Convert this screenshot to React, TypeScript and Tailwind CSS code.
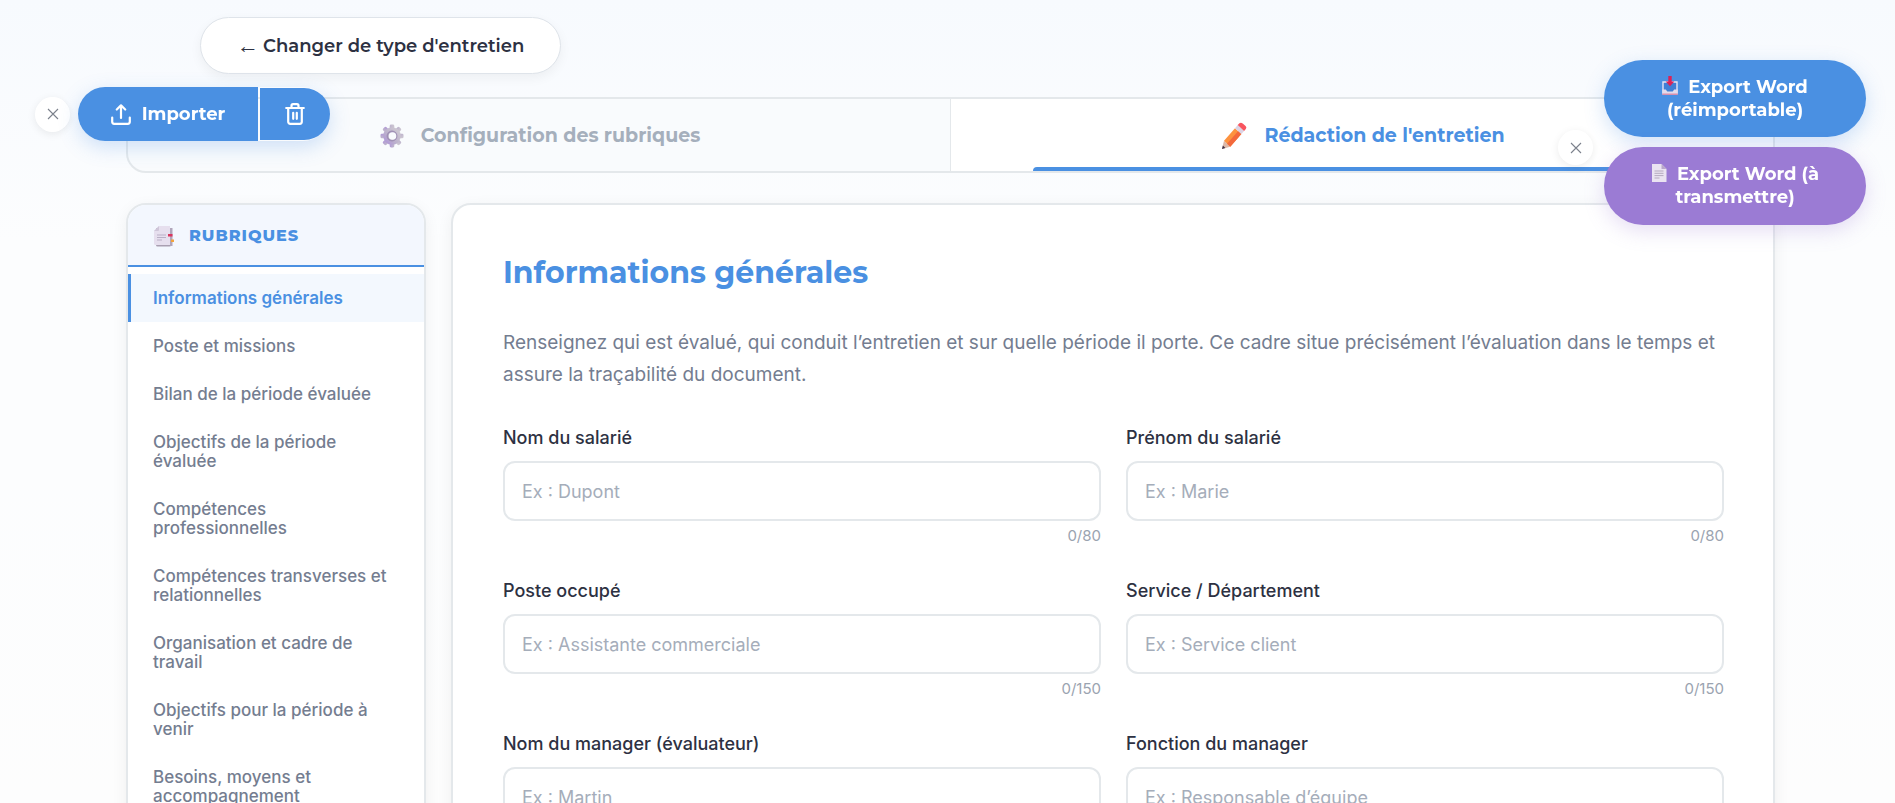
import React from "react";

const MONT = "font-[Montserrat,Inter,sans-serif]";

const sections = [
  "Informations générales",
  "Poste et missions",
  "Bilan de la période évaluée",
  "Objectifs de la période évaluée",
  "Compétences professionnelles",
  "Compétences transverses et relationnelles",
  "Organisation et cadre de travail",
  "Objectifs pour la période à venir",
  "Besoins, moyens et accompagnement",
];

const fields = [
  { id: "nom", label: "Nom du salarié", placeholder: "Ex : Dupont", max: 80 },
  { id: "prenom", label: "Prénom du salarié", placeholder: "Ex : Marie", max: 80 },
  { id: "poste", label: "Poste occupé", placeholder: "Ex : Assistante commerciale", max: 150 },
  { id: "service", label: "Service / Département", placeholder: "Ex : Service client", max: 150 },
  { id: "manager", label: "Nom du manager (évaluateur)", placeholder: "Ex : Martin", max: 80 },
  { id: "fonction", label: "Fonction du manager", placeholder: "Ex : Responsable d’équipe", max: 150 },
];

function GearIcon() {
  return (
    <svg viewBox="0 0 24 24" className="size-6 opacity-65" aria-hidden="true">
      <defs>
        <linearGradient id="gear" x1="1" y1="0" x2="0" y2="1">
          <stop offset="0" stopColor="#b9b0bd" />
          <stop offset="0.6" stopColor="#9d8bb3" />
          <stop offset="1" stopColor="#8a63c4" />
        </linearGradient>
      </defs>
      <g fill="url(#gear)">
        {[0, 45, 90, 135].map((a) => (
          <rect key={a} x="9.7" y="0.5" width="4.6" height="23" rx="1.4" transform={`rotate(${a} 12 12)`} />
        ))}
      </g>
      <circle cx="12" cy="12" r="6.5" fill="none" stroke="url(#gear)" strokeWidth="4.5" />
      <circle cx="12" cy="12" r="4.6" fill="none" stroke="#72598f" strokeWidth="1.7" />
      <circle cx="12.5" cy="12" r="3.8" fill="#f9fbfd" />
    </svg>
  );
}

function PencilIcon() {
  return (
    <svg viewBox="0 0 26 28" className="h-7 w-[26px]" aria-hidden="true">
      <path d="M1 27 3 18.800 9.300 24.800Z" fill="#dcb8a8" />
      <path d="M1 27 1.900 23.500 4.400 26Z" fill="#3b3147" />
      <path d="M3 18.800 14 6.200 20.400 12 9.300 24.800Z" fill="#fd923f" />
      <path d="M6 21.700 17.200 9.100 20.400 12 9.300 24.800Z" fill="#f3683c" />
      <path d="M14 6.200 16.700 3.100 23.100 8.900 20.400 12Z" fill="#dcd3e4" />
      <path d="M16.700 3.100 18.400 1.200Q20 0 22 1.700L24.600 4Q26 5.400 24.800 6.900L23.100 8.900Z" fill="#f8555f" />
    </svg>
  );
}

function TabsIcon() {
  return (
    <svg viewBox="0 0 20 22" className="h-[22px] w-5" aria-hidden="true">
      <path d="M2 3h15v17a1.500 1.500 0 0 1-1.500 1.500h-12A1.500 1.500 0 0 1 2 20Z" fill="#a99fb1" />
      <path d="M5 1h11v19H1.500A1.500 1.500 0 0 1 0 18.500V6Z" fill="#e6dfee" />
      <path d="M5 1v4a1 1 0 0 1-1 1H0Z" fill="#cfc6d9" />
      <path d="M3 10h9M3 12.500h9M3 15h5" stroke="#b9b0c6" strokeWidth="1.200" />
      <path d="M16 3h2.500v18H16Z" fill="#b1a6bb" />
      <rect x="14" y="9" width="4.500" height="2.500" fill="#d9365e" />
      <rect x="17" y="14.500" width="3" height="2.500" fill="#f2a33c" />
    </svg>
  );
}

function InboxIcon() {
  return (
    <svg viewBox="0 0 16 20" className="mr-[10px] inline-block h-5 w-4 align-[-3px]" aria-hidden="true">
      <path d="M1 6h14v11H1Z" fill="#3f7fd6" stroke="#e9e3f2" strokeWidth="1.400" />
      <path d="M.300 13.500h3.500l1.500 2h5.400l1.500-2h3.500v5H.300Z" fill="#e3dcec" />
      <path d="M.300 17.500h15.400v1.500H.300Z" fill="#d88fae" />
      <path d="M6.300 0h3.400v5.500h2.600L8 10.300 3.700 5.500h2.600Z" fill="#dc2157" />
    </svg>
  );
}

function PageIcon() {
  return (
    <svg viewBox="0 0 16 20" className="mr-[10px] inline-block h-5 w-4 align-[-3px]" aria-hidden="true">
      <path d="M1 1h9.500L15.500 6v13H1Z" fill="#eae3f1" />
      <path d="M10.500 1 15.500 6h-5Z" fill="#b9a8cb" />
      <path d="M3.500 8h9M3.500 10.300h9M3.500 12.600h9M3.500 15h5" stroke="#b5a9bf" strokeWidth="1" />
    </svg>
  );
}

function CloseButton({ label }: { label: string }) {
  return (
    <button
      type="button"
      aria-label={label}
      className="flex size-[35px] shrink-0 items-center justify-center rounded-full bg-white text-[#7b818c] shadow-[0_2px_8px_rgba(0,0,0,0.08)]"
    >
      <svg viewBox="0 0 12 12" className="size-3" fill="none" stroke="currentColor" strokeWidth="1.100" aria-hidden="true">
        <path d="M1 1 11 11M11 1 1 11" />
      </svg>
    </button>
  );
}

export default function App() {
  return (
    <div className="h-screen overflow-hidden bg-[linear-gradient(180deg,#f7fafe_0%,#fcfdfe_30%,#fcfdfe_60%,#fdfdfd_100%)] font-[Inter,sans-serif] text-[#2d3142]">
      <div className="pr-[120px] pl-[126px]">
        <div className="flex h-[97px] items-start pt-[17px] pl-[74px]">
          <button
            type="button"
            className={`${MONT} flex h-[57px] items-center gap-1 rounded-full border border-[#dfe4ea] bg-white px-9 pt-px text-[18px] font-semibold shadow-[0_4px_12px_rgba(0,0,0,0.05)]`}
          >
            <span className="font-['Liberation_Sans',sans-serif] text-[22px] leading-6 font-normal">←</span>
            Changer de type d'entretien
          </button>
        </div>

        <nav className={`${MONT} flex h-[76px] overflow-hidden rounded-[20px] border-2 border-[#e4e8eb] bg-[#f9fbfd] text-[19px] font-bold`}>
          <button type="button" className="flex flex-1 items-center justify-center gap-[17px] border-r border-[#e4e8eb] pt-[2px] pl-[2px] text-[#a5afbc]">
            <GearIcon />
            Configuration des rubriques
          </button>
          <button type="button" className="relative flex flex-1 items-center justify-center gap-[17px] bg-white pt-[2px] pl-[2px] text-[#4a90e2]">
            <PencilIcon />
            Rédaction de l'entretien
            <span className="absolute bottom-0 left-1/10 h-1 w-4/5 rounded-t-full bg-[#4a90e2]" />
          </button>
        </nav>

        <div className="mt-[30px] flex items-start gap-[25px]">
          <aside className="w-[300px] shrink-0 overflow-hidden rounded-[20px] border-2 border-[#e4e8eb] bg-white shadow-[0_4px_16px_rgba(0,0,0,0.06)]">
            <div className={`${MONT} flex h-[62px] items-center gap-[15px] border-b-2 border-[#4a90e2] bg-[#f3f7fe] px-[26px] pt-[2px] text-[16px] font-extrabold tracking-[1px] text-[#4a90e2]`}>
              <TabsIcon />
              RUBRIQUES
            </div>
            <ul className="py-[7px] text-[17px] leading-[19px] font-medium text-[#747d90]">
              {sections.map((s, i) => (
                <li key={s}>
                  <a
                    href={`#section-${i}`}
                    className={
                      i === 0
                        ? "block border-l-[3px] border-[#4a90e2] bg-[#f3f8fe] pt-[15px] pr-6 pb-[14px] pl-[22px] font-semibold text-[#4a90e2]"
                        : "block border-l-[3px] border-transparent pt-[15px] pr-6 pb-[14px] pl-[22px]"
                    }
                  >
                    {s}
                  </a>
                </li>
              ))}
            </ul>
          </aside>

          <main className="min-w-0 flex-1 rounded-[20px] border-2 border-[#e4e8eb] bg-white pt-12 pr-[49px] pb-12 pl-[50px] shadow-[0_4px_16px_rgba(0,0,0,0.06)]">
            <h2 className={`${MONT} text-[30px] leading-[40px] font-bold text-[#4a90e2]`}>Informations générales</h2>
            <p className="mt-[34px] text-[19px] leading-8 text-[#747d90]">
              Renseignez qui est évalué, qui conduit l’entretien et sur quelle période il porte. Ce cadre situe précisément
              l’évaluation dans le temps et assure la traçabilité du document.
            </p>
            <div className="mt-[35px] grid grid-cols-2 gap-x-[25px] gap-y-[34px]">
              {fields.map((f) => (
                <div key={f.id} className="flex flex-col">
                  <label htmlFor={f.id} className="text-[18px] leading-6 font-medium">
                    {f.label}
                  </label>
                  <input
                    id={f.id}
                    type="text"
                    maxLength={f.max}
                    placeholder={f.placeholder}
                    className="mt-[11px] h-[60px] w-full rounded-[12px] border-2 border-[#e4e8eb] bg-white px-[17px] text-[18px] outline-none placeholder:text-[#a5adba]"
                  />
                  <span className="mt-[6px] text-right text-[15px] leading-[18px] text-[#9aa3b0]">0/{f.max}</span>
                </div>
              ))}
            </div>
          </main>
        </div>
      </div>

      <div className="fixed top-[87px] left-[35px] flex items-center gap-2">
        <CloseButton label="Fermer l'import" />
        <div className={`${MONT} flex items-center gap-[2px] rounded-full text-[18px] font-bold text-white shadow-[0_6px_20px_rgba(74,144,226,0.25)]`}>
          <button type="button" className="flex h-[54px] w-[180px] items-center justify-center gap-[11px] rounded-l-full bg-[#4a90e2]">
            <svg viewBox="0 0 20 21" className="h-[21px] w-5" fill="none" stroke="currentColor" strokeWidth="2.200" strokeLinecap="round" strokeLinejoin="round" aria-hidden="true">
              <path d="M1.200 13.500v4.300a2 2 0 0 0 2 2h13.600a2 2 0 0 0 2-2V13.500M10 14V1.500M5.800 5.500 10 1.300l4.200 4.200" />
            </svg>
            Importer
          </button>
          <button type="button" aria-label="Supprimer" className="flex h-[52px] w-[70px] items-center justify-center rounded-r-full bg-[#4a90e2]">
            <svg viewBox="0 0 20 22" className="h-[22px] w-5" fill="none" stroke="currentColor" strokeWidth="2.200" strokeLinecap="round" strokeLinejoin="round" aria-hidden="true">
              <path d="M1.200 5h17.600M3.200 5v13.800a2 2 0 0 0 2 2h9.600a2 2 0 0 0 2-2V5M6.500 4.800V2.700a1.500 1.500 0 0 1 1.500-1.500h4a1.500 1.500 0 0 1 1.500 1.500v2.100M8.200 9.800v6M11.800 9.800v6" />
            </svg>
          </button>
        </div>
      </div>

      <div className="fixed top-[60px] right-[29px] flex items-center gap-[11px]">
        <div className="pt-[10px]">
          <CloseButton label="Fermer l'export" />
        </div>
        <div className={`${MONT} flex w-[262px] flex-col gap-[10px] text-center text-[18px] leading-[23px] font-bold text-white`}>
          <button type="button" className="h-[77px] rounded-full bg-[#4a90e2] px-[45px] shadow-[0_6px_20px_rgba(74,144,226,0.25)]">
            <InboxIcon />
            Export Word (réimportable)
          </button>
          <button type="button" className="h-[78px] rounded-full bg-[#9b7bd4] px-[42px] shadow-[0_6px_20px_rgba(155,123,212,0.25)]">
            <PageIcon />
            Export Word (à transmettre)
          </button>
        </div>
      </div>
    </div>
  );
}
